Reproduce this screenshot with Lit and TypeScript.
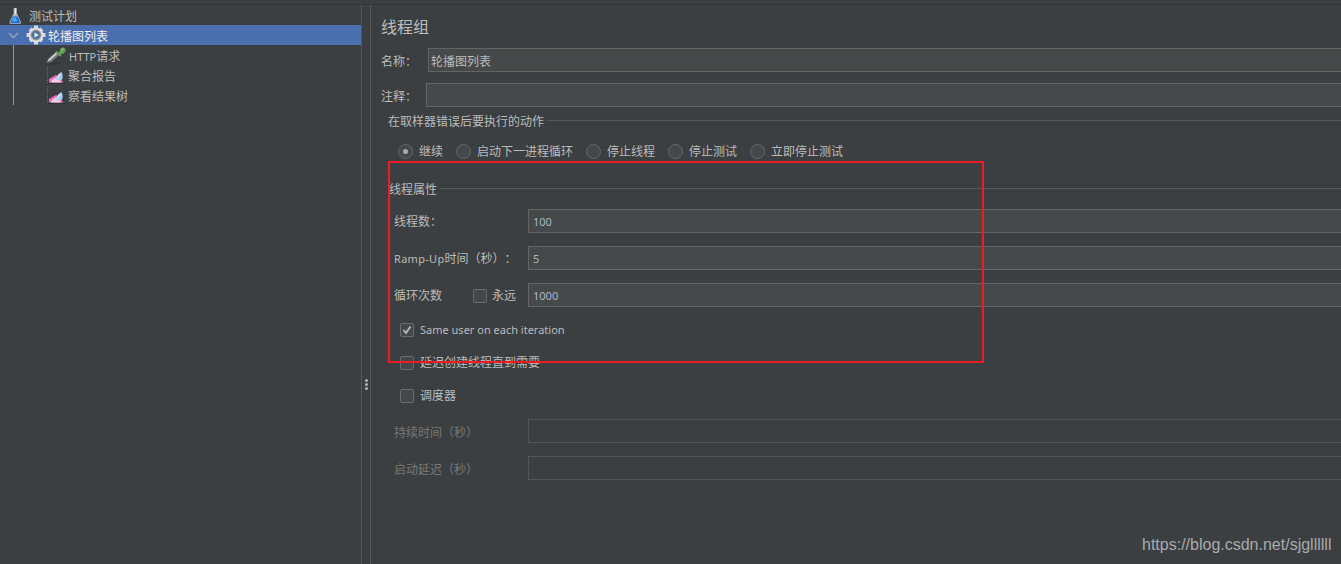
import { LitElement, html, css, svg } from "lit";
import { customElement } from "lit/decorators.js";

const flask = svg`<svg width="13" height="18" viewBox="0 0 14 18"><path d="M5 .5h3.500v5.500l4.500 9.500q.4 2-1.500 2h-9.500q-1.900 0-1.500-2l4.500-9.500z" fill="#aeb3ba"/><path d="M6 1h1.500v6H6z" fill="#e8eaec"/><path d="M4 9.500h5.500l2.500 6q.2 1.200-1 1.200H2.500q-1.200 0-1-1.200z" fill="#1a73d4"/><path d="M4.500 10.500h3L9 15H3z" fill="#4da3ef"/></svg>`;
const gear = svg`<svg width="20" height="20" viewBox="0 0 20 20"><g fill="#dcdcdc"><circle cx="10" cy="10" r="7.500"/><path d="M8 .6h4v4H8zM8 15.400h4v4H8zM.6 8h4v4h-4zM15.400 8h4v4h-4z"/><path d="M2.600 5.400 5.400 2.600 8 5.500 5.500 8zM14.600 2.600l2.800 2.800L14.500 8 12 5.500zM2.600 14.600 5.500 12 8 14.500l-2.600 2.900zM17.400 14.600l-2.800 2.800L12 14.500l2.500-2.500z"/></g><circle cx="10" cy="10" r="4.600" fill="#54749f"/><circle cx="10" cy="10" r="4.800" fill="none" stroke="#85888c"/><path d="M8.500 7.500 12.800 10l-4.300 2.500z" fill="#e6ecf5"/></svg>`;
const dropper = svg`<svg width="20" height="20" viewBox="0 0 20 20"><path d="M1 19.500 14 18" stroke="#2b2d2e" stroke-width="1.500" opacity=".6"/><path d="M.5 18 2 14 10.500 6 14 9.500 5 17z" fill="#77797b"/><path d="M2.500 15.500 10.500 8.500" stroke="#e4e5e5" stroke-width="1.300"/><path d="M10.500 6 13 7.500 14.500 4Q16.500 1.500 18.800 3.500T17.500 8.500L15 9.500 15.500 11 14 11.500 9.500 7z" fill="#62a352"/><path d="M15 5q1-1.500 2.500-1" stroke="#9bd08a" fill="none"/></svg>`;
const report = svg`<svg width="18" height="20" viewBox="0 0 18 20"><path d="M.5 1v17" fill="none" stroke="#6a6c6e" stroke-dasharray="1 1"/><path d="M.5 18.500H18" stroke="#2f3132"/><path d="M2 17.500V14L9 10l3 2 4.500 5.500z" fill="#ee6fb8"/><path d="M4 17.500l1-2.500 4-2.500 3 2 2.500 3z" fill="#f9cbe4"/><path d="M9 14q.5-4 5.500-7 2 4 .5 7.500-3.500 2-6-.5z" fill="#a8cdf5"/><path d="M10.500 13q.3-2 2.800-4" stroke="#eef6fe" fill="none"/></svg>`;

@customElement("app-root")
export class AppRoot extends LitElement {
  static styles = css`
    :host {
      display: block;
      position: relative;
      width: 1341px;
      height: 564px;
      overflow: hidden;
      background: #3c3f41;
      color: #bbbbbb;
      font: 12px/16px "Noto Sans", "Noto Sans CJK SC", sans-serif;
      text-spacing-trim: space-all;
    }
    .app { display: flex; height: 564px; padding-top: 4px; box-sizing: border-box; }
    .app::before { content: ""; position: absolute; left: 0; right: 0; top: 4px; height: 1px; background: #333638; }
    .lat { font-size: 11px; }
    .wide { letter-spacing: 0.3px; }
    .tree { width: 361px; flex: none; padding-top: 3px; box-sizing: border-box; position: relative; }
    .row { height: 20px; display: flex; align-items: center; white-space: nowrap; }
    .row svg { flex: none; display: block; }
    .row > span { padding-top: 4px; }
    .r0 { padding-left: 9px; gap: 7px; height: 18px; }
    .r0 > span { padding-top: 2px; }
    .r1 { background: #4b6eaf; color: #eeeeee; padding-left: 8px; }
    .chev { width: 11px; margin-right: 7px; }
    .r1 span { margin-left: 2px; }
    .r2 { padding-left: 46px; gap: 3px; }
    .r3 { padding-left: 47px; gap: 3px; }
    .stem { position: absolute; left: 13px; top: 41px; width: 1px; height: 60px; background: #6c9ccc; }
    .split { width: 10px; flex: none; box-sizing: border-box; border-left: 1px solid #555759; border-right: 1px solid #555759; display: flex; flex-direction: column; align-items: center; justify-content: center; gap: 1px; padding-top: 200px; }
    .split i { width: 3px; height: 3px; border-radius: 50%; background: #b0b2b4; }
    .main { flex: 1; min-width: 0; padding: 13px 0 0 10px; margin-right: -4px; }
    h1 { margin: 0; font-weight: 400; font-size: 16px; line-height: 20px; height: 20px; }
    .line { display: flex; align-items: center; }
    .nm { margin-top: 11px; height: 24px; }
    .nm label { width: 47px; flex: none; padding-top: 4px; }
    .cm { margin-top: 11px; height: 24px; }
    .cm label { width: 45px; flex: none; padding-top: 4px; }
    .field { flex: 1; height: 24px; box-sizing: border-box; border: 1px solid #646464; background: #45494a; padding: 2px 2px 0; line-height: 22px; color: #bbbbbb; white-space: nowrap; }
    .num { color: #a9b7c6; padding: 1px 4px 0; font-size: 11px; }
    .field.off { background: transparent; border-color: #545556; }
    .legend { display: flex; align-items: center; height: 16px; padding-left: 7px; }
    .legend > span { padding-top: 4px; }
    .legend::after { content: ""; flex: 1; height: 1px; background: #555759; margin-left: 3px; }
    .legend.a { margin-top: 5px; }
    .legend.b { margin-top: 20px; padding-left: 8px; }
    .radios { display: flex; margin-top: 14px; height: 18px; padding-left: 17px; align-items: center; }
    .radio { display: flex; align-items: center; gap: 6px; margin-right: 13px; }
    .radio > span:last-child { padding-top: 2px; }
    .dot { width: 15px; height: 15px; box-sizing: border-box; border: 1px solid #646668; border-radius: 50%; background: #43494a; display: flex; align-items: center; justify-content: center; }
    .dot i { width: 5px; height: 5px; border-radius: 50%; background: #a8aaac; }
    .prop { margin-left: 13px; }
    .prop .k { width: 134px; flex: none; display: flex; align-items: center; white-space: nowrap; padding-top: 2px; }
    .off-l .k { padding-top: 4px; }
    .p1 { margin-top: 13px; height: 24px; }
    .p2 { margin-top: 13px; height: 24px; }
    .forever { margin-left: 31px; gap: 5px; display: flex; align-items: center; }
    .box { width: 14px; height: 14px; box-sizing: border-box; border: 1px solid #6b6b6b; border-radius: 2px; background: #43494a; display: flex; align-items: center; justify-content: center; flex: none; }
    .chk { display: flex; align-items: center; gap: 6px; margin-left: 19px; height: 20px; white-space: nowrap; }
    .c1 { margin-top: 13px; }
    .c2 { margin-top: 13px; }
    .c3 { margin-top: 13px; }
    .off-l { color: #777777; }
    .d1 { margin-top: 13px; }
    .marker { position: absolute; left: 388px; top: 161px; width: 596px; height: 202px; box-sizing: border-box; border: 2px solid #ed1c24; pointer-events: none; }
    .mark { position: absolute; left: 1142px; top: 535px; font: 16px/20px "Liberation Sans", Arial, sans-serif; color: #a8aaab; white-space: nowrap; }
  `;

  private radio(label: string, on = false) {
    return html`<div class="radio"><span class="dot">${on ? html`<i></i>` : ""}</span><span>${label}</span></div>`;
  }

  render() {
    return html`
      <div class="app">
        <div class="tree">
          <div class="row r0">${flask}<span>测试计划</span></div>
          <div class="row r1">
            <svg class="chev" viewBox="0 0 11 7" height="7"><path d="M1 1l4.500 4.500L10 1" fill="none" stroke="#8ea0bf" stroke-width="1.600"/></svg>
            ${gear}<span>轮播图列表</span>
          </div>
          <div class="row r2">${dropper}<span><span class="lat">HTTP</span>请求</span></div>
          <div class="row r3">${report}<span>聚合报告</span></div>
          <div class="row r3">${report}<span>察看结果树</span></div>
          <div class="stem"></div>
        </div>
        <div class="split"><i></i><i></i><i></i></div>
        <div class="main">
          <h1>线程组</h1>
          <div class="line nm"><label>名称：</label><div class="field">轮播图列表</div></div>
          <div class="line cm"><label>注释：</label><div class="field"></div></div>
          <div class="legend a"><span>在取样器错误后要执行的动作</span></div>
          <div class="radios">
            ${this.radio("继续", true)}${this.radio("启动下一进程循环")}${this.radio("停止线程")}${this.radio("停止测试")}${this.radio("立即停止测试")}
          </div>
          <div class="legend b"><span>线程属性</span></div>
          <div class="prop">
            <div class="line p1"><div class="k">线程数：</div><div class="field num">100</div></div>
            <div class="line p2"><div class="k"><span class="lat wide">Ramp-Up</span>时间（秒）：</div><div class="field num">5</div></div>
            <div class="line p2"><div class="k">循环次数<span class="forever"><span class="box"></span>永远</span></div><div class="field num">1000</div></div>
          </div>
          <div class="chk c1"><span class="box"><svg width="10" height="10" viewBox="0 0 10 10"><path d="M1.500 5l2.500 3L8.500 1.500" fill="none" stroke="#bbbbbb" stroke-width="1.800"/></svg></span><span class="lat">Same user on each iteration</span></div>
          <div class="chk c2"><span class="box"></span><span>延迟创建线程直到需要</span></div>
          <div class="chk c3"><span class="box"></span><span>调度器</span></div>
          <div class="prop off-l">
            <div class="line d1"><div class="k">持续时间（秒）</div><div class="field off"></div></div>
            <div class="line p2"><div class="k">启动延迟（秒）</div><div class="field off"></div></div>
          </div>
        </div>
      </div>
      <div class="marker"></div>
      <div class="mark">https://blog.csdn.net/sjgllllll</div>
    `;
  }
}
